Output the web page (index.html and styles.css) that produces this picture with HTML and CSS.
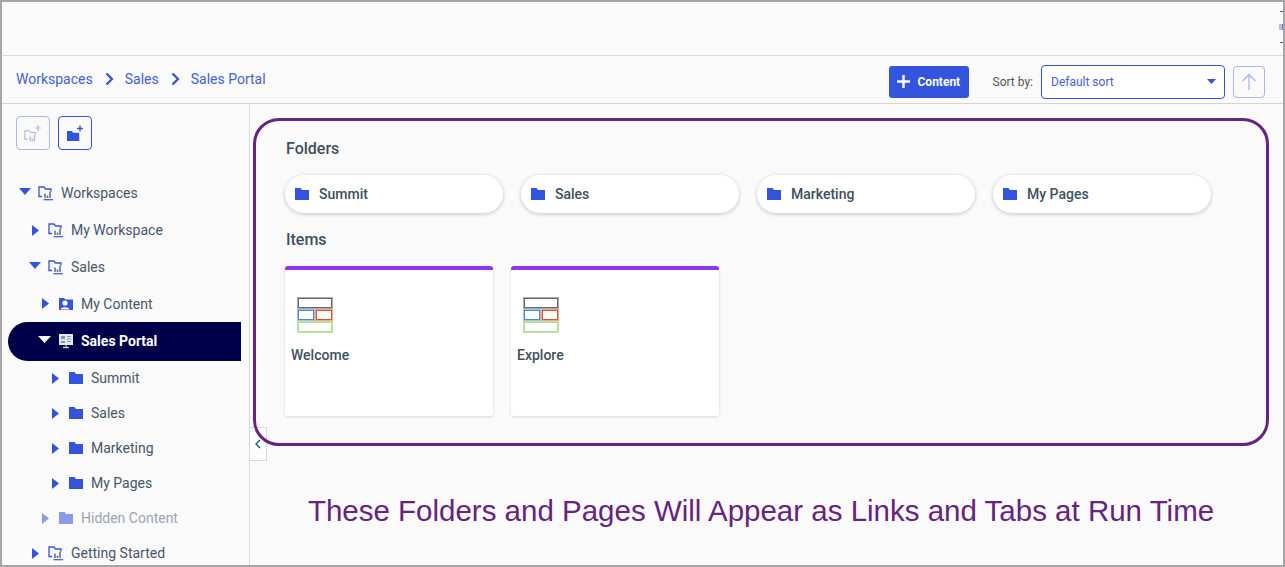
FILE: index.html
```html
<!DOCTYPE html>
<html lang="en">
<head>
<meta charset="utf-8">
<title>Sales Portal</title>
<link rel="stylesheet" href="styles.css">
</head>
<body>
<svg class="defs" width="0" height="0" aria-hidden="true">
  <defs>
    <symbol id="folder" viewBox="0 0 14 12" preserveAspectRatio="none">
      <path d="M0 0H5.5L7 2H14V12H0Z" fill="currentColor"/>
    </symbol>
    <symbol id="workspace" viewBox="0 0 16 16">
      <path d="M4 11.5H1V2H6L7.5 4H13V6.5" fill="none" stroke="currentColor" stroke-width="1.3"/>
      <path d="M7 8.5V13M9.5 10.5V13M12 6.5V13" fill="none" stroke="#5b6b7c" stroke-width="1.5"/>
      <path d="M5.5 14.7H15" fill="none" stroke="currentColor" stroke-width="1.2"/>
    </symbol>
    <symbol id="workspace-faded" viewBox="0 0 16 16">
      <path d="M4 11.5H1V2H6L7.5 4H13V6.5" fill="none" stroke="currentColor" stroke-width="1.3"/>
      <path d="M7 8.5V14M9.5 10.5V14M12 6.5V14" fill="none" stroke="currentColor" stroke-width="1.5"/>
    </symbol>
    <symbol id="caret-r" viewBox="0 0 7 11" preserveAspectRatio="none"><path d="M0 0L7 5.5L0 11Z" fill="currentColor"/></symbol>
    <symbol id="caret-d" viewBox="0 0 12 7" preserveAspectRatio="none"><path d="M0 0H12L6 7Z" fill="currentColor"/></symbol>
  </defs>
</svg>
<div class="frame">
  <header class="topbar"><span class="clipped"></span></header>
  <nav class="crumbbar">
    <div class="crumbs">
      <a>Workspaces</a>
      <svg class="chev" viewBox="0 0 9 14"><path d="M1.5 1.5L7 7L1.5 12.5" fill="none" stroke="currentColor" stroke-width="2.300"/></svg>
      <a>Sales</a>
      <svg class="chev" viewBox="0 0 9 14"><path d="M1.5 1.5L7 7L1.5 12.5" fill="none" stroke="currentColor" stroke-width="2.300"/></svg>
      <a>Sales Portal</a>
    </div>
    <div class="tools">
      <button class="add"><svg class="plus" viewBox="0 0 13 13"><path d="M6.5 0V13M0 6.500H13" stroke="currentColor" stroke-width="2.400" fill="none"/></svg>Content</button>
      <span class="sortlabel">Sort by:</span>
      <div class="select"><span>Default sort</span><svg class="sel-caret"><use href="#caret-d"/></svg></div>
      <button class="up"><svg viewBox="0 0 16 18"><path d="M8 17V2M1.500 8L8 1.500L14.500 8" fill="none" stroke="currentColor" stroke-width="1.300"/></svg></button>
    </div>
  </nav>
  <div class="body">
    <aside class="side">
      <div class="sidebtns">
        <button class="sq faded">
          <svg viewBox="0 0 24 22" width="24" height="22"><use href="#workspace-faded" x="3" y="7" width="14" height="14"/><path d="M17 3V9M14 6H20" stroke="currentColor" stroke-width="1.200" fill="none"/></svg>
        </button>
        <button class="sq">
          <svg viewBox="0 0 24 22" width="24" height="22"><use href="#folder" x="4" y="9" width="12.500" height="10"/><path d="M17 3.500V9.500M14 6.500H20" stroke="currentColor" stroke-width="1.400" fill="none"/></svg>
        </button>
      </div>
      <ul class="tree">
        <li class="row l0 tall"><svg class="cd"><use href="#caret-d"/></svg><svg class="ic"><use href="#workspace"/></svg><span>Workspaces</span></li>
        <li class="row l1 tall"><svg class="cr"><use href="#caret-r"/></svg><svg class="ic"><use href="#workspace"/></svg><span>My Workspace</span></li>
        <li class="row l1 tall"><svg class="cd"><use href="#caret-d"/></svg><svg class="ic"><use href="#workspace"/></svg><span>Sales</span></li>
        <li class="row l2 mid"><svg class="cr"><use href="#caret-r"/></svg>
          <svg class="ic" viewBox="0 0 16 16"><path d="M1 2H6L7.500 3.500H15V14H1Z" fill="currentColor"/><circle cx="7" cy="7" r="2.600" fill="#fff"/><path d="M2.500 13.500C3 10.500 11 10.500 11.500 13.500Z" fill="#fff"/></svg>
          <span>My Content</span></li>
        <li class="row l2 current"><svg class="cd"><use href="#caret-d"/></svg>
          <svg class="ic" viewBox="0 0 16 16"><rect x="1" y="1" width="14" height="11" fill="#e6e8ef"/><path d="M3 3H7V6H3ZM3 8H7V10H3Z" fill="#8a93ad"/><path d="M9 3.500H13M9 6H13M9 8.500H13" stroke="#8a93ad" fill="none"/><path d="M5 14.500H11" stroke="#c9cdd9" stroke-width="1.500" fill="none"/><path d="M8 12V14" stroke="#c9cdd9" fill="none"/></svg>
          <span>Sales Portal</span></li>
        <li class="row l3"><svg class="cr"><use href="#caret-r"/></svg><svg class="fd"><use href="#folder"/></svg><span>Summit</span></li>
        <li class="row l3"><svg class="cr"><use href="#caret-r"/></svg><svg class="fd"><use href="#folder"/></svg><span>Sales</span></li>
        <li class="row l3"><svg class="cr"><use href="#caret-r"/></svg><svg class="fd"><use href="#folder"/></svg><span>Marketing</span></li>
        <li class="row l3"><svg class="cr"><use href="#caret-r"/></svg><svg class="fd"><use href="#folder"/></svg><span>My Pages</span></li>
        <li class="row l2 hidden"><svg class="cr"><use href="#caret-r"/></svg><svg class="fd"><use href="#folder"/></svg><span>Hidden Content</span></li>
        <li class="row l1"><svg class="cr"><use href="#caret-r"/></svg><svg class="ic"><use href="#workspace"/></svg><span>Getting Started</span></li>
      </ul>
    </aside>
    <main class="main">
      <button class="collapse"><svg viewBox="0 0 7 10"><path d="M6 1L2 5L6 9" fill="none" stroke="currentColor" stroke-width="1.300"/></svg></button>
      <section class="callout">
        <h2>Folders</h2>
        <div class="pills">
          <div class="pill"><svg class="fd"><use href="#folder"/></svg>Summit</div>
          <div class="pill"><svg class="fd"><use href="#folder"/></svg>Sales</div>
          <div class="pill"><svg class="fd"><use href="#folder"/></svg>Marketing</div>
          <div class="pill"><svg class="fd"><use href="#folder"/></svg>My Pages</div>
        </div>
        <h2 class="items">Items</h2>
        <div class="cards">
          <article class="card">
            <div class="layout"><i class="a"></i><i class="b"></i><i class="c"></i><i class="d"></i></div>
            <h3>Welcome</h3>
          </article>
          <article class="card">
            <div class="layout"><i class="a"></i><i class="b"></i><i class="c"></i><i class="d"></i></div>
            <h3>Explore</h3>
          </article>
        </div>
      </section>
      <p class="note">These Folders and Pages Will Appear as Links and Tabs at Run Time</p>
    </main>
  </div>
</div>
</body>
</html>
```
FILE: styles.css
```css
* { box-sizing: border-box; }
html, body { margin: 0; padding: 0; height: 100%; overflow: hidden; }
body { font-family: Roboto, "Liberation Sans", sans-serif; font-size: 14px; color: #46566a; background: #fafafa; }
.defs { position: absolute; }
.frame { width: 1285px; height: 567px; border: 2px solid #a6a6a6; display: flex; flex-direction: column; overflow: hidden; background: #fafafa; }
.topbar { height: 54px; flex: none; border-bottom: 1px solid #d9d9d9; position: relative; }
.clipped { position: absolute; right: 0; top: 9px; width: 3px; height: 32px; border-top: 1px solid #3355dd; border-bottom: 1px solid #3355dd; }
.clipped::after { content: ""; position: absolute; right: 0; top: 12px; width: 3px; height: 6px; background: #a9c0f0; border-right: 1px solid #7a6fd0; }
.crumbbar { height: 48px; flex: none; border-bottom: 1px solid #d4d4d4; display: flex; justify-content: space-between; padding: 0 18px 0 14px; }
.crumbs { display: flex; align-items: center; height: 45px; color: #3f5fe0; }
.crumbs a { color: #4560dc; }
.chev { width: 9px; height: 14px; margin: 0 11px 0 12px; color: #3355dd; }
.tools { display: flex; align-items: center; padding-top: 4px; }
.add { height: 32px; width: 80px; border: 0; border-radius: 3px; background: #3355dd; color: #fff; font: 700 12px Roboto, sans-serif; display: flex; align-items: center; padding: 0 0 0 8px; margin-right: 24px; }
.plus { width: 13px; height: 13px; margin-right: 8px; }
.sortlabel { font-size: 12px; color: #555; margin-right: 8px; }
.select { width: 184px; height: 34px; border: 1px solid #3355dd; border-radius: 4px; background: #fff; display: flex; align-items: center; justify-content: space-between; padding: 0 8px 0 9px; font-size: 12px; color: #4560dc; margin-right: 8px; }
.sel-caret { width: 9px; height: 5px; color: #3355dd; }
.up { width: 32px; height: 32px; padding: 0; border: 1px solid #a9b8ef; border-radius: 4px; background: #fafafa; color: #a9b8ef; display: flex; align-items: center; justify-content: center; }
.up svg { width: 16px; height: 18px; }
.body { flex: 1; min-height: 0; display: flex; }
.side { width: 248px; flex: none; border-right: 1px solid #d9d9d9; overflow: hidden; }
.sidebtns { display: flex; gap: 8px; padding: 12px 0 0 14px; height: 70.5px; }
.sq { width: 34px; height: 34px; padding: 0; border: 1px solid #3355dd; border-radius: 4px; background: #fafafa; color: #3355dd; display: flex; align-items: center; justify-content: center; }
.sq.faded { border-color: #a9b8ef; color: #a9b8ef; }
.tree { list-style: none; margin: 0; padding: 0; }
.row { height: 35px; display: flex; align-items: center; color: #46566a; }
.tall { height: 37px; }
.mid { height: 36.5px; }
.row .cd { width: 12px; height: 7px; color: #3355dd; margin: 0 7px 3px 0; flex: none; }
.row .cr { width: 7px; height: 11px; color: #3355dd; margin: 0 9px 0 0; flex: none; }
.row .ic { width: 16px; height: 16px; color: #3355dd; margin-right: 7px; flex: none; }
.row .fd { width: 14px; height: 12px; color: #3355dd; margin: 0 8px 0 1px; flex: none; }
.l0 { padding-left: 17px; }
.l1 { padding-left: 30px; }
.l1 .cd { margin-left: -3px; }
.l2 { padding-left: 40px; }
.l3 { padding-left: 50px; }
.current { height: 39px; margin: 0 8px -0.5px 6px; padding: 0 0 1px 30px; background: #00004a; color: #fff; font-weight: 700; border-radius: 20px 0 0 20px; }
.row.current .cd { color: #fff; width: 13px; margin-right: 7px; }
.hidden { color: #9aa5b3; }
.row.hidden .cr, .row.hidden .fd { color: #8a9bea; }
.main { flex: 1; min-width: 0; position: relative; padding: 14px 14px 0 3px; }
.callout { position: relative; height: 328px; border: 3px solid #66237f; border-radius: 26px; padding: 18px 0 0 29px; }
h2 { margin: 0 0 0 1px; font-size: 16px; font-weight: 500; color: #3e4f60; line-height: 19px; }
.pills { display: flex; gap: 18px; margin-top: 17px; }
.pill { width: 218px; height: 38px; border-radius: 19px; background: #fff; box-shadow: 0 1px 4px rgba(0,0,0,.22); display: flex; align-items: center; padding-left: 10px; font-weight: 500; color: #3e4f60; }
.pill .fd { width: 14px; height: 12px; color: #3355dd; margin-right: 10px; }
.items { margin-top: 17px; }
.cards { display: flex; gap: 18px; margin-top: 17px; }
.card { width: 208px; height: 150px; background: #fff; border-top: 4px solid #8a36f0; border-radius: 3px; box-shadow: 0 1px 3px rgba(0,0,0,.15); padding: 27px 6px 0; }
.layout { width: 36px; height: 36px; margin-left: 6px; display: grid; grid-template-columns: 1fr 1fr; grid-template-rows: repeat(3, 1fr); }
.layout i { background: #fff; border: 1px solid; display: block; }
.layout .a { grid-column: 1 / 3; border-color: #a6abb0; box-shadow: inset 0 0 0 1px #5f6b76; }
.layout .b { border-color: #a8c2e3; box-shadow: inset 0 0 0 1px #4f86c6; }
.layout .c { border-color: #f2a890; box-shadow: inset 0 0 0 1px #e0512c; }
.layout .d { grid-column: 1 / 3; border-color: #c4e6ae; box-shadow: inset 0 0 0 1px #a9dc8b; }
h3 { margin: 13px 0 0; font-size: 14px; font-weight: 500; color: #3e4f60; line-height: 18px; }
.collapse { position: absolute; left: 0; top: 323px; width: 17px; height: 34px; padding: 0 1px 0 0; border: 1px solid #d9d9d9; border-left: 0; background: #fff; color: #1d4e7a; display: flex; align-items: center; justify-content: center; }
.collapse svg { width: 7px; height: 10px; }
.note { margin: 48px 0 0; text-align: center; font-family: "Liberation Sans", Arial, sans-serif; font-size: 29.5px; line-height: 34px; color: #66237f; }
```
